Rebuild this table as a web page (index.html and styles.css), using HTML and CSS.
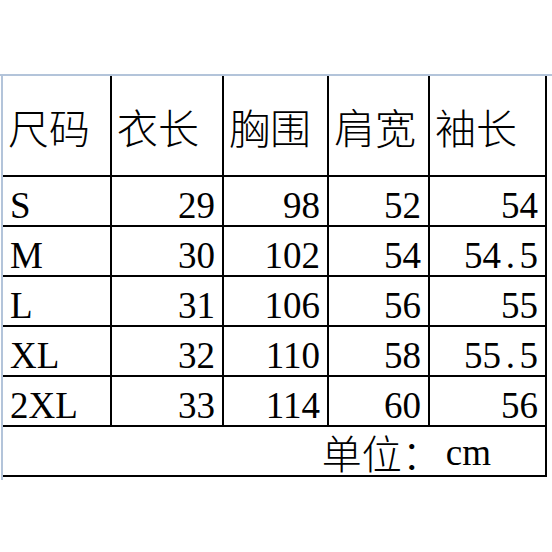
FILE: index.html
```html
<!DOCTYPE html>
<html lang="zh-CN">
<head>
<meta charset="utf-8">
<title>尺码表</title>
<link rel="stylesheet" href="styles.css">
</head>
<body>
<div class="sheet">
  <div class="grid">
    <div class="c h">尺码</div>
    <div class="c h">衣长</div>
    <div class="c h">胸围</div>
    <div class="c h">肩宽</div>
    <div class="c h">袖长</div>

    <div class="c l">S</div>
    <div class="c r">29</div>
    <div class="c r">98</div>
    <div class="c r">52</div>
    <div class="c r">54</div>

    <div class="c l">M</div>
    <div class="c r">30</div>
    <div class="c r">102</div>
    <div class="c r">54</div>
    <div class="c r">54<span class="pt">.</span>5</div>

    <div class="c l">L</div>
    <div class="c r">31</div>
    <div class="c r">106</div>
    <div class="c r">56</div>
    <div class="c r">55</div>

    <div class="c l">XL</div>
    <div class="c r">32</div>
    <div class="c r">110</div>
    <div class="c r">58</div>
    <div class="c r">55<span class="pt">.</span>5</div>

    <div class="c l">2XL</div>
    <div class="c r">33</div>
    <div class="c r">114</div>
    <div class="c r">60</div>
    <div class="c r">56</div>

    <div class="c foot"><span class="unit">单位：</span><span class="cm">cm</span></div>
  </div>
</div>
</body>
</html>
```

FILE: styles.css
```css
html, body {
  margin: 0;
  background: #fff;
}

body {
  padding-top: 74px;
  color: #000;
  font-family: "Liberation Serif", "Noto Sans CJK SC", serif;
}

.sheet {
  border-top: 2px solid #b3c4da;
}

.grid {
  display: grid;
  grid-template-columns: 109px 112px 105px 101px 117px;
  grid-template-rows: 101px repeat(6, 50px);
  width: max-content;
  margin-left: 1px;
  border-left: 2px solid #b3c4da;
  padding-bottom: 3px;
}

.c {
  box-sizing: border-box;
  display: flex;
  border-right: 2px solid #000;
  border-bottom: 2px solid #000;
  line-height: 1;
  white-space: nowrap;
}

.h {
  align-items: center;
  padding-left: 5px;
  padding-top: 2px;
  font-family: "Noto Sans CJK SC", sans-serif;
  font-weight: 300;
  font-size: 41px;
}

.l,
.r {
  align-items: flex-end;
  padding-bottom: 1px;
  font-size: 37px;
}

.l {
  padding-left: 7px;
}

.r {
  justify-content: flex-end;
  padding-right: 7px;
}

.pt {
  display: inline-block;
  width: 0.5em;
  text-align: center;
}

.foot {
  grid-column: 1 / -1;
  align-items: center;
  justify-content: flex-end;
  padding-right: 54px;
  padding-top: 2px;
}

.unit {
  font-family: "Noto Sans CJK SC", sans-serif;
  font-weight: 300;
  font-size: 40px;
}

.cm {
  font-size: 37px;
  margin-left: 4px;
}
```
